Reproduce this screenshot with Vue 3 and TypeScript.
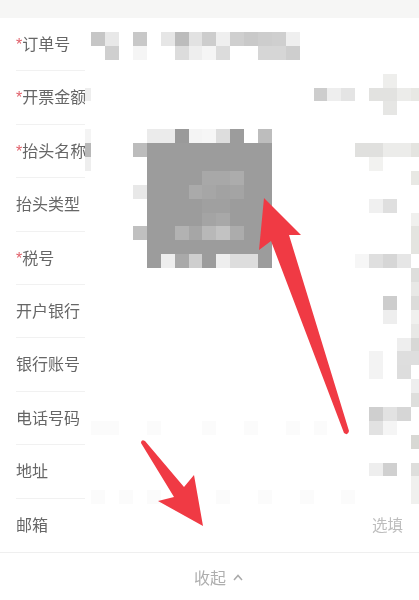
<script setup lang="ts">
interface Field { label: string; required: boolean; hint?: string }
const fields: Field[] = [
  { label: '订单号', required: true },
  { label: '开票金额', required: true },
  { label: '抬头名称', required: true },
  { label: '抬头类型', required: false },
  { label: '税号', required: true },
  { label: '开户银行', required: false },
  { label: '银行账号', required: false },
  { label: '电话号码', required: false },
  { label: '地址', required: false },
  { label: '邮箱', required: false, hint: '选填' },
]

type Cell = [number, number, string]
const FIRST_COL = 5
const cells: Cell[] = []
const add = (row: number, list: Array<[number, string]>) => list.forEach(([c, v]) => cells.push([c, row, v]))

for (let r = 10; r <= 17; r++) for (let c = 10; c <= 18; c++) add(r, [[c, '#9c9c9c']])

add(2, [[6, '#c6c6c6'], [7, '#e8e8e8'], [9, '#c8c8c8'], [11, '#e6e6e6'], [12, '#bcbcbc'], [13, '#e2e2e2'], [14, '#cdcdcd'], [15, '#efefef'], [16, '#cfcfcf'], [17, '#c9c9c9'], [18, '#cdcdcd'], [19, '#cfcfcf'], [20, '#efefef']])
add(3, [[7, '#cfcfcf'], [9, '#f5f5f5'], [12, '#dcdcdc'], [13, '#eeeeee'], [14, '#f5f5f5'], [15, '#dcdcdc'], [18, '#d6d6d6'], [19, '#d6d6d6'], [20, '#cecece']])
add(5, [[27, '#eeeeec']])
add(6, [[5, '#eeeeee'], [22, '#cdcdcd'], [23, '#eeeeee'], [24, '#e4e4e4'], [26, '#e2e2e0'], [27, '#e2e2e0'], [28, '#ececea'], [29, '#e8e8e4']])
add(7, [[27, '#e6e6e4']])
add(9, [[5, '#f4f4f4'], [10, '#ebebeb'], [11, '#ebebeb'], [12, '#9a9a9a'], [13, '#f4f4f4'], [14, '#f6f6f6'], [15, '#dddddd'], [16, '#9c9c9c'], [18, '#bdbdbd']])
add(10, [[5, '#b8b8b8'], [9, '#bcbcbc'], [25, '#e0e0de'], [26, '#e0e0de'], [27, '#ececea'], [28, '#ececea'], [29, '#e4e4e0']])
add(11, [[5, '#eeeeee'], [26, '#f2f2f0']])
add(12, [[14, '#a8a8a8'], [15, '#a8a8a8'], [16, '#acacac'], [29, '#e8e8e4']])
add(13, [[9, '#e8e8e8'], [13, '#aaaaaa'], [14, '#a6a6a6'], [15, '#a2a2a2'], [16, '#a4a4a4']])
add(14, [[14, '#a0a0a0'], [15, '#a0a0a0'], [26, '#f0f0f0'], [27, '#dfdfdf']])
add(15, [[14, '#a4a4a4'], [15, '#a8a8a8'], [29, '#f0f0ee']])
add(16, [[9, '#c0c0c0'], [12, '#b2b2b2'], [13, '#a6a6a6'], [14, '#b8b8b8'], [15, '#c2c2c2'], [16, '#acacac'], [29, '#e4e4e0']])
add(17, [[29, '#e4e4e0']])
add(18, [[10, '#9c9c9c'], [11, '#eeeeee'], [12, '#a9a9a9'], [13, '#cecece'], [14, '#9c9c9c'], [15, '#eeeeee'], [16, '#dddddd'], [17, '#dddddd'], [18, '#9c9c9c'], [25, '#f6f6f6'], [26, '#dfdfdf'], [27, '#d6d6d6'], [28, '#e6e6e6']])
add(19, [[29, '#dededc']])
add(20, [[29, '#e8e8e6']])
add(21, [[27, '#cdcdcd'], [29, '#dcdcda']])
add(22, [[27, '#eeeeee'], [29, '#f0f0ee']])
add(23, [[29, '#e8e8e6']])
add(24, [[29, '#d8d8d6'], [28, '#eeeeee']])
add(25, [[26, '#f3f3f3'], [28, '#dedede'], [29, '#dedede']])
add(26, [[26, '#f3f3f3'], [28, '#dddddd']])
add(27, [[29, '#eeeeee']])
add(28, [[29, '#dededc']])
add(29, [[26, '#cfcfcf'], [27, '#e2e2e2'], [28, '#d6d6d6']])
add(30, [[6, '#fbfbfb'], [7, '#fbfbfb'], [10, '#fbfbfb'], [14, '#fbfbfb'], [17, '#fbfbfb'], [20, '#fbfbfb'], [22, '#fbfbfb'], [26, '#e2e2e2'], [27, '#f5f5f5']])
add(31, [[29, '#d8d8d4']])
add(33, [[26, '#eeeeee'], [27, '#d0d0d0'], [29, '#dededc']])
add(34, [[29, '#f0f0ee']])
add(35, [[6, '#fbfbfb'], [8, '#fbfbfb'], [10, '#fbfbfb'], [15, '#fbfbfb'], [18, '#fbfbfb'], [21, '#fbfbfb'], [24, '#fbfbfb'], [29, '#f0f0ee']])

const cellStyle = (c: Cell) => ({
  gridColumn: String(c[0] - FIRST_COL + 1),
  gridRow: String(c[1] + 1),
  background: c[2],
})
</script>

<template>
  <div class="page">
    <div class="top-band"></div>
    <div class="form">
      <div v-for="f in fields" :key="f.label" class="row">
        <div class="label">
          <span v-if="f.required" class="star">*</span>{{ f.label }}
        </div>
        <div class="value">{{ f.hint }}</div>
      </div>
    </div>
    <div class="collapse">
      <span>收起</span>
      <svg class="chevron" width="10" height="7" viewBox="0 0 10 7" fill="none">
        <path d="M1 6 L5 1.5 L9 6" stroke="#aaaaaa" stroke-width="1.5" />
      </svg>
    </div>

    <div class="mosaic">
      <div class="mosaic-grid">
        <i v-for="(c, i) in cells" :key="i" :style="cellStyle(c)"></i>
      </div>
    </div>

    <svg class="arrows" width="419" height="600" viewBox="0 0 419 600">
      <path d="M264 198 L301 235 L289 235 L349 431 Q348 436 344 433 L271 241 L259 250 Z" fill="#f03a44" />
      <path d="M141 443 Q141 439 145 441 L184 487 L194 475 L203 526 L158 501 L174 497 Z" fill="#f03a44" />
    </svg>
  </div>
</template>

<style scoped>
.page {
  position: relative;
  width: 419px;
  height: 600px;
  overflow: hidden;
  background: #ffffff;
  font-family: "Liberation Sans", "Noto Sans CJK SC", sans-serif;
}
.top-band {
  height: 18px;
  background: #f6f6f5;
  filter: blur(0.5px);
}
.form {
  filter: blur(0.35px);
}
.row {
  display: flex;
  height: 53.4px;
  padding: 0 16px;
  box-sizing: border-box;
}
.row:last-child {
  height: 54px;
  border-bottom: 1px solid #efefef;
  padding-right: 16px;
}
.label {
  flex: 0 0 69px;
  width: 69px;
  height: 100%;
  line-height: 53px;
  font-size: 16px;
  color: #666666;
  white-space: nowrap;
  overflow: hidden;
  box-sizing: border-box;
  border-bottom: 1px solid #f1f1f1;
}
.row:last-child .label {
  border-bottom: none;
}
.star {
  color: #e0606a;
}
.value {
  flex: 1;
  text-align: right;
  line-height: 53px;
  font-size: 15.5px;
  color: #bdbdbd;
}
.collapse {
  display: flex;
  align-items: center;
  justify-content: center;
  gap: 7px;
  height: 49px;
  padding-left: 18px;
  font-size: 16px;
  color: #aeaeae;
  filter: blur(0.35px);
}
.chevron {
  display: block;
}
.mosaic {
  position: absolute;
  left: 85px;
  top: 0;
  right: 0;
  height: 520px;
  overflow: hidden;
  filter: blur(0.5px);
}
.mosaic-grid {
  display: grid;
  grid-template-columns: repeat(25, 13.9px);
  grid-auto-rows: 13.9px;
  margin-left: -7.6px;
  margin-top: 4.2px;
}
.arrows {
  position: absolute;
  left: 0;
  top: 0;
}
</style>
